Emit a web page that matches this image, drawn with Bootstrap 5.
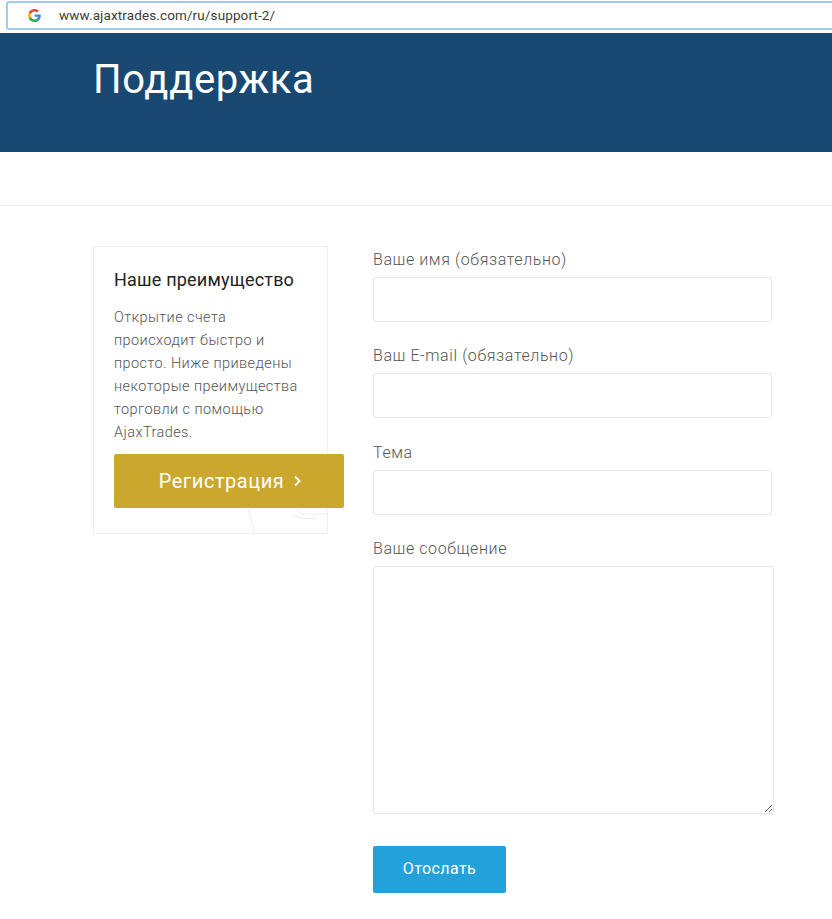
<!DOCTYPE html>
<html lang="ru"><head><meta charset="utf-8"><title>Поддержка</title>
<link rel="stylesheet" href="https://cdn.jsdelivr.net/npm/bootstrap@5.3.0/dist/css/bootstrap.min.css">
<style>
html,body{height:919px;overflow:hidden}
body{font-family:Roboto,"Liberation Sans",sans-serif;font-weight:300;background:#fff;color:#555}
.urlwrap{height:33px;padding:1px 0 3px 6px}
.urlbar{height:29px;border:2px solid #9fcde8;border-right:0;border-radius:3px 0 0 3px;padding-left:20px;gap:18px;font-size:13.5px;font-weight:400;color:#3c3c3c;letter-spacing:.12px}
.hero{background:#194972;height:119px;padding:23px 0 0 93px}
.hero h1{color:#fff;font-size:40px;font-weight:400;line-height:48px;margin:0;letter-spacing:.6px}
.strip{height:54px;border-bottom:1px solid #ececec}
.mainrow{padding:40px 0 0 93px;gap:45px}
.promo{width:235px;height:288px;border:1px solid #efefef;padding:20px;position:relative;flex:none}
.promo h2{font-size:18px;font-weight:400;color:#222;line-height:26px;margin:0 0 13px;letter-spacing:.2px}
.promo p{font-size:14.5px;line-height:23px;margin:0 0 10px;color:#555;letter-spacing:.42px}
.regbtn{width:230px;height:54px;background:#cba72d;color:#fff;font-size:20px;font-weight:400;border:0;border-radius:2px;gap:10px;letter-spacing:.55px;position:relative;z-index:1;padding-left:14px}
.regbtn:hover{background:#cba72d;color:#fff}
.watermark{position:absolute;left:150px;top:258px}
.formcol{width:401px}
.fld{margin-bottom:23.3px}
.fld label{display:block;font-size:16px;line-height:22px;margin:3px 0 6px;color:#555;letter-spacing:.6px}
.fld .form-control{width:399px;height:45px;border:1px solid #e6e6e6;border-radius:3px;box-shadow:none}
.fld textarea.form-control{width:401px;height:248px;border-radius:2px;margin-bottom:32px}
.sendbtn{width:133px;height:47px;background:#23a1da;color:#fff;font-size:16px;font-weight:400;border:0;border-radius:2px;letter-spacing:.4px}
.sendbtn:hover{background:#23a1da;color:#fff}
</style></head><body>
<div class="urlwrap"><div class="urlbar d-flex align-items-center">
<svg width="13" height="13" viewBox="0 0 48 48" aria-hidden="true"><path fill="#EA4335" d="M24 9.500c3.500 0 6.700 1.200 9.200 3.600l6.900-6.900C35.900 2.400 30.500 0 24 0 14.600 0 6.500 5.400 2.600 13.200l8 6.200C12.500 13.700 17.800 9.500 24 9.500z"/><path fill="#4285F4" d="M47 24.500c0-1.600-.1-3.100-.4-4.500H24v9h12.900c-.6 3-2.200 5.500-4.700 7.200l7.700 6C44.400 37.900 47 31.800 47 24.500z"/><path fill="#FBBC05" d="M10.600 28.600A14.500 14.500 0 0 1 10.600 19.400l-8-6.200a24 24 0 0 0 0 21.600z"/><path fill="#34A853" d="M24 48c6.500 0 11.900-2.100 15.900-5.800l-7.700-6c-2.200 1.500-4.900 2.300-8.200 2.300-6.200 0-11.500-4.200-13.400-9.900l-8 6.200C6.500 42.600 14.600 48 24 48z"/></svg>
<span>www.ajaxtrades.com/ru/support-2/</span></div></div>
<header class="hero"><h1>Поддержка</h1></header>
<div class="strip"></div>
<main class="mainrow d-flex align-items-start">
<aside class="promo">
<h2>Наше преимущество</h2>
<p>Открытие счета происходит быстро и просто. Ниже приведены некоторые преимущества торговли с помощью AjaxTrades.</p>
<a href="#" class="btn regbtn d-flex align-items-center justify-content-center">Регистрация <svg width="7" height="12" viewBox="0 0 7 12" aria-hidden="true"><path d="M1 1.500 5.500 6 1 10.500" fill="none" stroke="#fff" stroke-width="1.800"/></svg></a>
<svg class="watermark" width="84" height="28" viewBox="0 0 84 28" aria-hidden="true"><path d="M4 4l7 24M53 2l4 7 26 0M48 10l9 3 16 1" fill="none" stroke="#ececec" stroke-width="1"/></svg>
</aside>
<form class="formcol">
<div class="fld"><label for="f1">Ваше имя (обязательно)</label><input id="f1" class="form-control" type="text"></div>
<div class="fld"><label for="f2">Ваш E-mail (обязательно)</label><input id="f2" class="form-control" type="email"></div>
<div class="fld"><label for="f3">Тема</label><input id="f3" class="form-control" type="text"></div>
<div class="fld"><label for="f4">Ваше сообщение</label><textarea id="f4" class="form-control d-block"></textarea>
<button type="button" class="btn sendbtn">Отослать</button></div>
</form>
</main>
</body></html>
